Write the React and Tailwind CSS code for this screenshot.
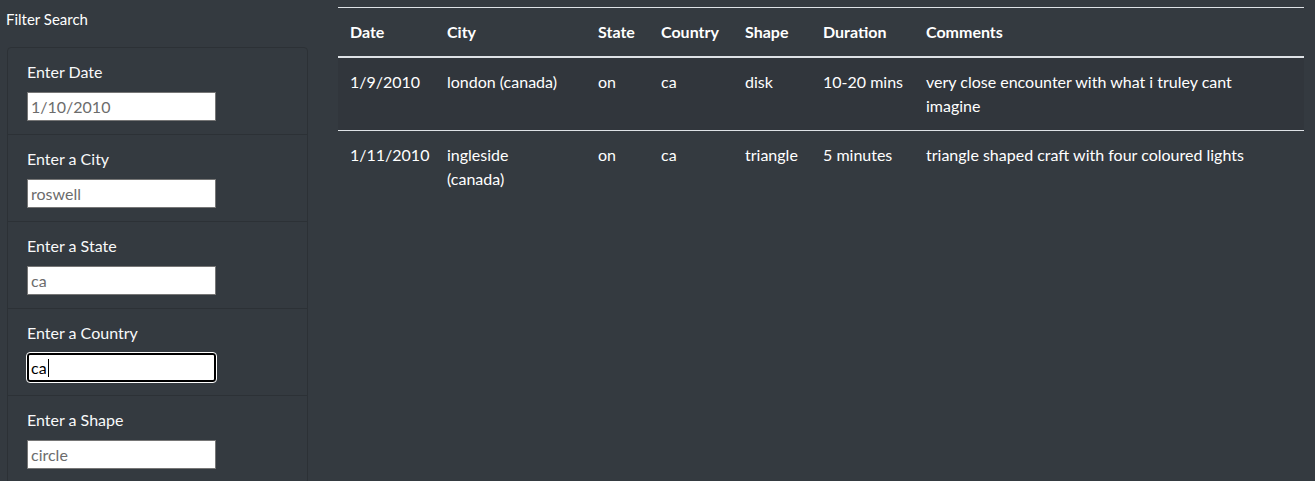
import React from "react";

const fields = [
  { label: "Enter Date", value: "1/10/2010" },
  { label: "Enter a City", value: "roswell" },
  { label: "Enter a State", value: "ca" },
  { label: "Enter a Country", value: "ca", focused: true },
  { label: "Enter a Shape", value: "circle" },
];

const rows = [
  {
    date: "1/9/2010",
    city: "london (canada)",
    state: "on",
    country: "ca",
    shape: "disk",
    duration: "10-20 mins",
    comments: "very close encounter with what i truley cant imagine",
  },
  {
    date: "1/11/2010",
    city: "ingleside (canada)",
    state: "on",
    country: "ca",
    shape: "triangle",
    duration: "5 minutes",
    comments: "triangle shaped craft with four coloured lights",
  },
];

export default function App() {
  return (
    <div
      className="w-[1315px] h-[481px] overflow-hidden bg-[#343a40] text-white flex"
      style={{ fontFamily: "Lato, 'Open Sans', sans-serif" }}
    >
      <div className="w-[315px] shrink-0 pl-[7px]">
        <div className="text-[15px] leading-[24px] pt-[7px] -ml-[1px]">Filter Search</div>
        <div className="mt-[16px] w-[301px] border border-[#2c3136] rounded-[4px]">
          {fields.map((f, i) => (
            <div
              key={i}
              className="px-[19px] pt-[12px] pb-[12px] border-b border-[#2c3136] h-[87px]"
            >
              <div className="text-[16px] leading-[24px] mb-[8px] text-[#f8f9fa]">{f.label}</div>
              {f.focused ? (
                <div className="relative w-[189px] h-[29px] bg-white border-2 border-black rounded-[3px] outline outline-1 outline-white flex items-center pl-[2px] text-black text-[16px]">
                  <span>ca</span>
                  <span className="inline-block w-[1px] h-[18px] bg-black ml-[1px]"></span>
                </div>
              ) : (
                <div className="w-[189px] h-[29px] bg-white border border-[#767676] flex items-center pl-[3px] text-[#6c6c6c] text-[16px]">
                  {f.value}
                </div>
              )}
            </div>
          ))}
        </div>
      </div>
      <div className="pl-[23px] pt-[7px]">
        <table className="w-[966px] border-collapse text-[16px] leading-[24px] text-white table-fixed">
          <colgroup>
            <col className="w-[97px]" />
            <col className="w-[151px]" />
            <col className="w-[63px]" />
            <col className="w-[84px]" />
            <col className="w-[78px]" />
            <col className="w-[103px]" />
            <col />
          </colgroup>
          <thead>
            <tr className="border-t border-[#dee2e6] border-b-2 border-b-[#dee2e6]">
              {["Date", "City", "State", "Country", "Shape", "Duration", "Comments"].map((h) => (
                <th key={h} className="text-left font-bold px-[12px] py-[12px] align-top">
                  {h}
                </th>
              ))}
            </tr>
          </thead>
          <tbody>
            {rows.map((r, i) => (
              <tr
                key={i}
                className={i === 0 ? "bg-[#31363c] border-b border-[#dee2e6]" : ""}
              >
                <td className="px-[12px] py-[12px] align-top">{r.date}</td>
                <td className="px-[12px] py-[12px] align-top">
                  <div className="max-w-[118px]">{r.city}</div>
                </td>
                <td className="px-[12px] py-[12px] align-top">{r.state}</td>
                <td className="px-[12px] py-[12px] align-top">{r.country}</td>
                <td className="px-[12px] py-[12px] align-top">{r.shape}</td>
                <td className="px-[12px] py-[12px] align-top whitespace-nowrap">{r.duration}</td>
                <td className="px-[12px] py-[12px] align-top">
                  <div className="max-w-[340px]">{r.comments}</div>
                </td>
              </tr>
            ))}
          </tbody>
        </table>
      </div>
    </div>
  );
}
